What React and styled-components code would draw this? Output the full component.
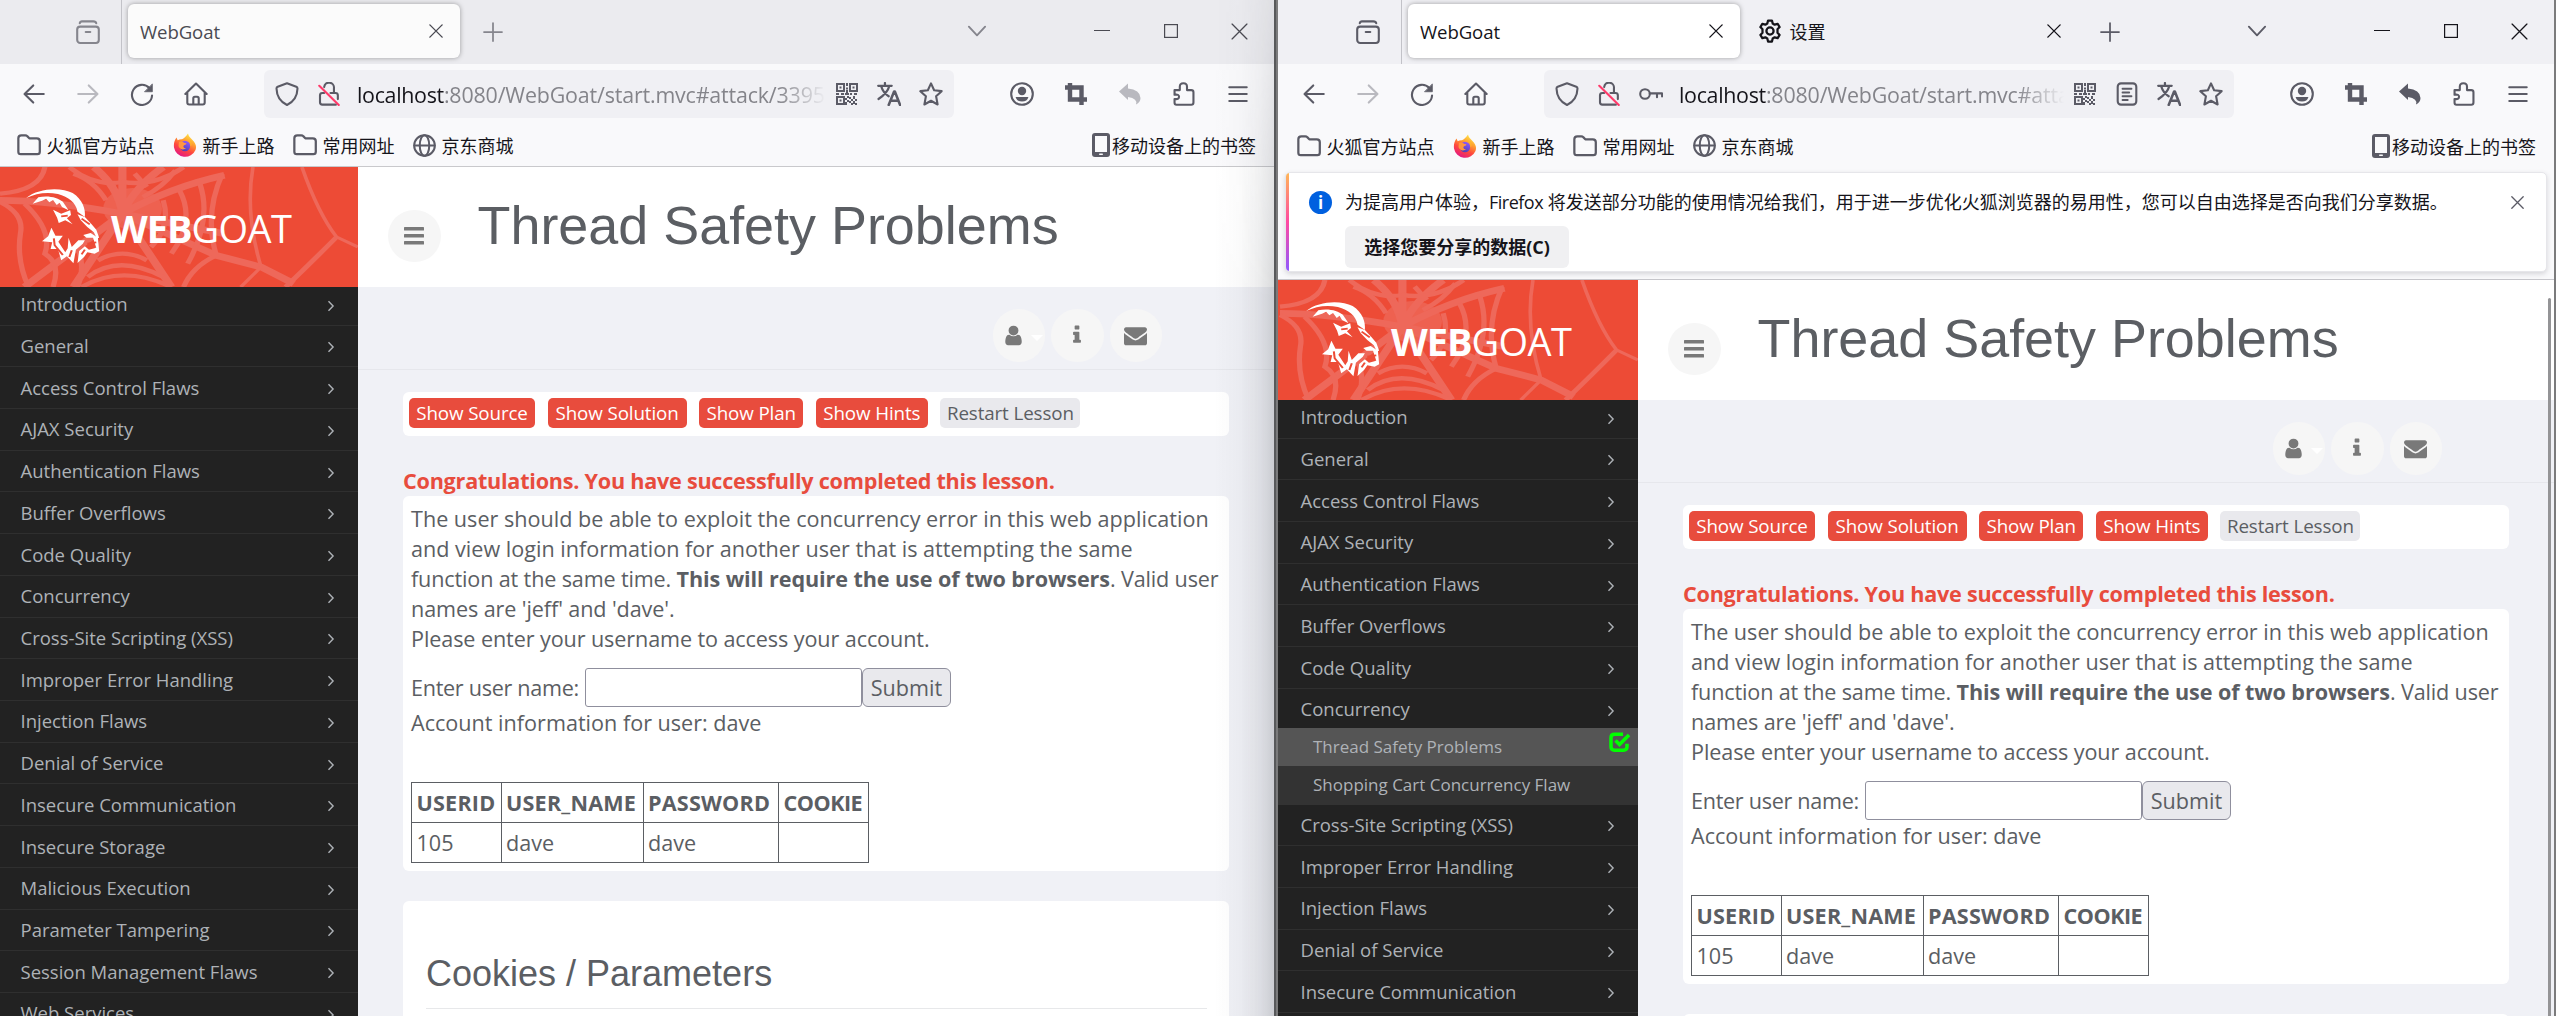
import React from "react";
import styled, { createGlobalStyle } from "styled-components";

const UI = `"Open Sans", "Noto Sans", "Noto Sans CJK SC", sans-serif`;

const Global = createGlobalStyle`
  *, *::before, *::after { box-sizing: border-box; }
  body { margin: 0; overflow: hidden; background: #6f7173; font-family: ${UI}; }
  button, input { font: inherit; color: inherit; }
`;

/* ---------- window frame ---------- */

const Desktop = styled.div`
  display: flex;
  width: 2556px;
  height: 1016px;
  overflow: hidden;
  background: linear-gradient(90deg, #58595b 0 1276px, #7b7b7c 1276px);
`;

const Pane = styled.div`
  position: relative;
  display: flex;
  justify-content: flex-end;
  width: ${(p) => p.$width}px;
  margin-right: ${(p) => p.$gap}px;
  height: 1016px;
  overflow: hidden;
`;

const Frame = styled.div`
  flex: none;
  display: flex;
  flex-direction: column;
  width: 1276px;
  height: 1016px;
  background: #f9f9fb;
`;

const EdgeShade = styled.div`
  position: absolute;
  inset: 0 0 0 auto;
  width: 60px;
  pointer-events: none;
  background: linear-gradient(90deg, rgba(60, 64, 72, 0) 0%, rgba(60, 64, 72, 0.03) 45%, rgba(60, 64, 72, 0.1) 75%, rgba(60, 64, 72, 0.2) 100%);
  mask-image: linear-gradient(180deg, rgba(0, 0, 0, 0.35), #000 300px);
`;

/* ---------- tab strip ---------- */

const TabStrip = styled.div`
  flex: none;
  display: flex;
  align-items: center;
  height: 64px;
  padding-left: 63px;
  background: ${(p) => (p.$active ? "#f0f0f4" : "#ebebef")};
  color: ${(p) => (p.$active ? "#15141a" : "#4a4a52")};
`;

const Slot = styled.span`
  flex: none;
  display: flex;
  align-items: center;
  justify-content: center;
  width: ${(p) => p.$w}px;
  height: ${(p) => p.$h || 48}px;
  color: ${(p) => p.$color || "#5b5b66"};
  opacity: ${(p) => (p.$dim ? 0.4 : 1)};
  svg { display: block; }
`;

const StripDivider = styled.span`
  width: 1px;
  height: 64px;
  margin: 0 6px;
  background: #c2c2c8;
`;

const Tab = styled.div`
  flex: none;
  display: flex;
  align-items: center;
  width: 332px;
  height: 54px;
  margin-right: 5.5px;
  margin-top: -2px;
  padding: 0 12px;
  gap: 8px;
  border-radius: 6px;
  font-size: 18px;
  background: ${(p) => (p.$current ? (p.$active ? "#fff" : "#fbfbfb") : "transparent")};
  box-shadow: ${(p) => (p.$current ? "0 0 5px rgba(0,0,0,.35)" : "none")};
`;

const TabTitle = styled.span`
  flex: 1;
  font-size: ${(p) => (p.$cjk ? 18 : 18.6)}px;
  letter-spacing: ${(p) => (p.$cjk ? 0 : -0.1)}px;
`;

const WindowButtons = styled.div`
  display: flex;
  margin-left: auto;
  align-items: center;
  margin-top: -2px;
`;

const ButtonGap = styled.span`
  width: 63px;
`;

/* ---------- navigation bar ---------- */

const NavBar = styled.div`
  flex: none;
  display: flex;
  align-items: center;
  height: 60px;
  padding: 0 9px;
`;

const UrlField = styled.div`
  display: flex;
  align-items: center;
  width: 690px;
  height: 48px;
  margin: 0 41px;
  padding: 0 2px;
  border-radius: 6px;
  background: #f0f0f4;
`;

const UrlText = styled.span`
  flex: 1;
  min-width: 0;
  overflow: hidden;
  white-space: nowrap;
  margin-left: 7px;
  font-size: 21.4px;
  letter-spacing: -0.16px;
  color: #84848a;
  mask-image: linear-gradient(90deg, #000 calc(100% - 48px), transparent);
  b { font-weight: 400; color: #15141a; letter-spacing: -0.3px; }
`;

/* ---------- bookmarks ---------- */

const Bookmarks = styled.div`
  flex: none;
  display: flex;
  align-items: center;
  height: ${(p) => (p.$tall ? 48 : 43)}px;
  padding: 0 18px ${(p) => (p.$tall ? 5 : 0)}px 18.5px;
  border-bottom: ${(p) => (p.$tall ? "0" : "1px solid #c9c9cc")};
`;

const Bookmark = styled.span`
  display: flex;
  align-items: center;
  gap: ${(p) => (p.$last ? 2 : 6)}px;
  margin-right: ${(p) => (p.$last ? 0 : 18)}px;
  margin-left: ${(p) => (p.$last ? "auto" : 0)};
  font: 18px/26px "Noto Sans CJK SC", sans-serif;
  color: #15141a;
  svg { display: block; flex: none; color: #5b5b66; }
`;

/* ---------- notification ---------- */

const NoticeArea = styled.div`
  flex: none;
  height: 108px;
  padding: 0 7px;
  border-bottom: 1px solid #c6c6cb;
`;

const Notice = styled.div`
  position: relative;
  display: grid;
  grid-template-columns: 24px 1fr 30px;
  column-gap: 12px;
  height: 100px;
  padding: 15px 14px 0 23px;
  border-radius: 5px;
  overflow: hidden;
  background: #fff;
  border: 1px solid #e6e6ea;
  box-shadow: 0 2px 5px rgba(58, 57, 68, 0.18);
  font: 18px/28px "Open Sans", "Noto Sans CJK SC", sans-serif;
  color: #15141a;
  &::before {
    content: "";
    position: absolute;
    inset: 0 auto 0 0;
    width: 3px;
    background: linear-gradient(#ffb657, #ff4aa2 50%, #9059ff);
  }
`;

const InfoDot = styled.span`
  width: 23px;
  height: 23px;
  margin-top: 3px;
  border-radius: 50%;
  background: #0060df;
  color: #fff;
  font: 700 17px/23px "Open Sans", sans-serif;
  text-align: center;
`;

const NoticeText = styled.div`
  white-space: nowrap;
`;

const Latin = styled.span`
  letter-spacing: -0.5px;
`;

const NoticeButton = styled.button`
  display: block;
  width: 224px;
  height: 42px;
  margin-top: 10px;
  border: 0;
  border-radius: 6px;
  background: #f0f0f2;
  color: #15141a;
  font: 700 18px/24px "Open Sans", "Noto Sans CJK SC", sans-serif;
  padding: 0;
`;

/* ---------- WebGoat page ---------- */

const Page = styled.div`
  position: relative;
  flex: 1;
  min-height: 0;
  display: grid;
  grid-template-columns: 360px 1fr;
  overflow: hidden;
  background: #f0f1f6;
`;

const Sidebar = styled.aside`
  min-height: 0;
  overflow: hidden;
  background: #222;
`;

const Brand = styled.div`
  position: relative;
  height: 120px;
  background: #ed4b36;
  overflow: hidden;
  svg { display: block; }
`;

const BrandName = styled.div`
  position: absolute;
  left: 113px;
  top: 35px;
  font: 400 38px/52px "Open Sans", sans-serif;
  letter-spacing: -0.6px;
  color: #fff;
  b { font-weight: 700; letter-spacing: -1px; }
`;

const MenuRow = styled.div`
  display: flex;
  justify-content: space-between;
  height: ${(p) => (p.$open ? 38.7 : 41.72)}px;
  margin-top: ${(p) => (p.$first ? -3.2 : 0)}px;
  padding: 7.4px 23px 0 22.5px;
  border-bottom: ${(p) => (p.$open ? 0 : 1)}px solid #2f2f2f;
  font-size: 18.5px;
  line-height: 26px;
  color: #aeb2b7;
  svg { margin-top: 8.5px; }
`;

const SubRow = styled.div`
  display: flex;
  justify-content: space-between;
  height: 38.5px;
  padding: 6px 7px 0 35px;
  font-size: 17px;
  line-height: 26px;
  background: ${(p) => (p.$current ? "#555" : "#333")};
  color: #aeb2b7;
  svg { margin-top: -2px; }
`;

const Main = styled.main`
  min-width: 0;
`;

const TitleBar = styled.header`
  display: flex;
  height: 120px;
  padding-left: 30px;
  background: #fff;
`;

const Round = styled.span`
  flex: none;
  display: flex;
  align-items: center;
  justify-content: center;
  width: 52.5px;
  height: 52.5px;
  border-radius: 50%;
  background: #f6f6f6;
  color: #797979;
  margin-top: ${(p) => p.$top || 0}px;
`;

const Title = styled.h1`
  margin: 28px 0 0 37px;
  font: 400 53.9px/60px "Liberation Sans", Arial, sans-serif;
  color: #5b5e63;
`;

const Tools = styled.div`
  display: flex;
  justify-content: flex-end;
  gap: 6px;
  height: 83px;
  padding: 22px 112px 0 0;
  border-bottom: 1px solid #e6e7ec;
`;

const Caret = styled.i`
  margin-left: 6px;
  margin-top: 6px;
  margin-right: -7px;
  border: 6px solid transparent;
  border-top-color: #fff;
  border-bottom: 0;
`;

const Body = styled.div`
  padding: 22px 45px 0;
  font-size: 21.6px;
  line-height: 30px;
  color: #5b5e63;
`;

const Card = styled.section`
  border-radius: 6px;
  background: #fff;
`;

const ButtonBar = styled(Card)`
  display: flex;
  gap: 12.6px;
  height: 44px;
  padding: 6px;
`;

const LessonButton = styled.button`
  width: ${(p) => p.$w}px;
  height: 30px;
  padding: 0;
  border: 0;
  border-radius: 5px;
  white-space: nowrap;
  font-size: 18.8px;
  line-height: 30px;
  letter-spacing: -0.12px;
  background: ${(p) => (p.$plain ? "#e9e9ed" : "#e84c3d")};
  color: ${(p) => (p.$plain ? "#5b5e63" : "#fff")};
`;

const Congrats = styled.div`
  margin-top: 30px;
  height: 30px;
  font-weight: 700;
  white-space: nowrap;
  letter-spacing: -0.24px;
  color: #e84c3d;
`;

const Lesson = styled(Card)`
  height: 375px;
  padding: 8px 8px 0;
`;

const Line = styled.div`
  white-space: nowrap;
  letter-spacing: ${(p) => p.$ls || 0}px;
  b { letter-spacing: -0.1px; }
`;

const FormRow = styled.div`
  display: flex;
  align-items: center;
  height: 39px;
  margin: 14px 0 1px;
  white-space: nowrap;
`;

const FormLabel = styled.label`
  flex: none;
  width: 174px;
  letter-spacing: -0.3px;
`;

const NameInput = styled.input`
  flex: none;
  width: 277px;
  height: 39px;
  border: 1.5px solid #8f8f9d;
  border-radius: 3px;
  background: #fff;
`;

const Submit = styled.button`
  width: 89px;
  height: 39px;
  padding: 0;
  border: 1.5px solid #8f8f9d;
  border-radius: 6px;
  background: #e9e9ed;
`;

const Table = styled.table`
  margin-top: 43.5px;
  border-collapse: collapse;
  table-layout: fixed;
  width: 458px;
  th, td {
    height: 40px;
    padding: 1px 0 0 4.5px;
    border: 1px solid #5b5e63;
    text-align: left;
    white-space: nowrap;
  }
  th { letter-spacing: 0.2px; }
  th:last-child { letter-spacing: -0.5px; }
`;

const Col = styled.col`
  width: ${(p) => p.$w}px;
`;

const Cookies = styled(Card)`
  height: 300px;
  margin-top: 30px;
  padding: 48px 22px 0 23px;
`;

const CookiesTitle = styled.h2`
  margin: 0;
  height: 60px;
  border-bottom: 1px solid #e7e8ea;
  font: 400 36px/50px "Liberation Sans", Arial, sans-serif;
`;

const ScrollThumb = styled.div`
  position: absolute;
  right: 3px;
  top: 18px;
  bottom: 0;
  width: 3px;
  border-radius: 2px 2px 0 0;
  background: #949496;
`;

/* ---------- icons ---------- */

function Ico({ s = 24, w = 1.4, children, fill = "none", box = 16 }) {
  return (
    <svg width={s} height={s} viewBox={`0 0 ${box} ${box}`} fill={fill} stroke={fill === "none" ? "currentColor" : "none"} strokeWidth={w} strokeLinecap="round" strokeLinejoin="round">
      {children}
    </svg>
  );
}

const ViewIcon = () => (
  <Ico><path d="M4 .9h7.6q1.6 0 1.9 1.3M2.5 2.2Q2.8.9 4 .9" /><rect x=".8" y="4.4" width="14.4" height="10.9" rx="2" /><path d="M6.5 8h3" /></Ico>
);
const CloseIcon = ({ s = 14, w = 1.6 }) => <Ico s={s} w={w}><path d="M1 1l14 14M15 1L1 15" /></Ico>;
const PlusIcon = () => <Ico s={20} w={1.4}><path d="M8 .8v14.4M.8 8h14.4" /></Ico>;
const ChevronDown = () => <Ico s={20} w={1.5}><path d="M1.5 4.500L8 11.500l6.500-7" /></Ico>;
const MinIcon = () => <Ico s={16} w={1.2}><path d="M.5 7.500h15" /></Ico>;
const MaxIcon = () => <svg width="14" height="14" fill="none" stroke="currentColor" strokeWidth="1.2"><rect x=".6" y=".6" width="12.8" height="12.8" /></svg>;
const BackIcon = () => <Ico><path d="M14.5 8H1.8M7.5 2.300L1.700 8l5.800 5.700" /></Ico>;
const ForwardIcon = () => <Ico><path d="M1.5 8h12.700M8.500 2.300L14.300 8l-5.800 5.700" /></Ico>;
const ReloadIcon = () => (
  <Ico><path d="M12.9 4A6.700 6.700 0 1 0 14.700 9" /><path d="M14.9 1.500v5H9.900z" fill="currentColor" strokeWidth=".5" /></Ico>
);
const HomeIcon = () => (
  <Ico><path d="M.9 8L8 1l7.100 7M2.200 7v6.700q0 1.300 1.300 1.300h9q1.300 0 1.300-1.300V7M6.200 14.800v-4q0-1 1-1h1.600q1 0 1 1v4" /></Ico>
);
const ShieldIcon = () => <Ico><path d="M8 .9l6.200 2.300q.8.300.8 1.100Q14.800 12 8 15.300 1.200 12 1 4.300 1 3.500 1.800 3.200z" /></Ico>;
const LockIcon = () => (
  <Ico><path d="M4.800 3.400V3.300a3.200 3.200 0 0 1 6.500.8v3M9 7.300h3.300q1.600 0 1.600 1.600v2.500M4.800 7.300H3.600Q2 7.300 2 8.900v4.600q0 1.600 1.600 1.600h9" /><path d="M1.500 2.500l13 12.800" stroke="#ff3b6b" /></Ico>
);
const KeyIcon = () => <Ico><circle cx="4" cy="8" r="3.2" /><path d="M7.200 7.600h8.200v2M12 7.600v2.600" /></Ico>;
const QrIcon = () => (
  <svg width="22" height="22" viewBox="0 0 22 22" fill="none" stroke="currentColor" strokeWidth="2">
    <rect x="1" y="1" width="7" height="7" /><rect x="14" y="1" width="7" height="7" /><rect x="1" y="14" width="7" height="7" />
    <path d="M3.500 4.500h2M16.500 4.500h2M3.500 17.500h2M11 0v3M10 5.500h2M11 7v3M0 11h3M5 11h3M9 11h4M14 11h2M18 11h3M12 13v2M10 15v2M12 17v2M10 19v3M14 14v2M16 16v2M18 13v3M20 16v2M14 18v2M18 18v3M16 20v2M20 20v2" />
  </svg>
);
const ReaderIcon = () => (
  <Ico><rect x="1.8" y=".9" width="12.4" height="14.2" rx="2.2" /><path d="M5 4.500h6M5 7h4.500M5 9.500h6M5 12h3.500" strokeWidth="1.2" /></Ico>
);
const TranslateIcon = () => (
  <Ico w={1.5}><path d="M.8 2.500h9M5.300.7v1.800M8.200 2.700Q7 7.500 1 11.300M2.800 2.800Q4 7 7.800 9.500" /><path d="M7.800 15.300l3.600-9h.5l3.500 9M9 12.500h5.200" strokeWidth="1.7" /></Ico>
);
const StarIcon = () => <Ico><path d="M8 .9l2.100 4.600 5 .6-3.700 3.400 1 5.500L8 12.500 3.600 15l1-5.500L.9 6.100l5-.6z" /></Ico>;
const AccountIcon = () => (
  <Ico><circle cx="8" cy="8" r="7.2" /><circle cx="8" cy="6" r="2.8" fill="currentColor" stroke="none" /><path d="M3.700 10h8.600q-.8 3-4.300 3t-4.300-3z" fill="currentColor" stroke="none" /></Ico>
);
const CropIcon = () => (
  <svg width="22" height="22" viewBox="0 0 22 22" fill="none" stroke="currentColor" strokeWidth="4.4">
    <path d="M5 0v16.500h17M0 4.500h16.500V22" />
  </svg>
);
const UndoIcon = () => (
  <svg width="22" height="22" viewBox="0 0 22 22" fill="currentColor"><path d="M0 8.500L9 .5v5q12 1 12.500 9.500 0 4-4.500 6.500 2-6-8-7.500v3z" /></svg>
);
const PuzzleIcon = () => (
  <Ico><path d="M3 15.200q-1.300 0-1.300-1.300v-2.600q3 .5 3-1.400t-3-1.400V5.400h3.500V3.100Q5.200.8 7.600.8T10 3.100v2.300h2.800q1.500 0 1.500 1.500v6.800q0 1.500-1.500 1.500z" /></Ico>
);
const MenuIcon = () => <Ico s={20} w={1.6}><path d="M1 2.500h14M1 8h14M1 13.500h14" /></Ico>;
const FolderIcon = () => <Ico w={1.5}><path d="M.9 12.500v-9q0-2 2-2h2.600q.8 0 1.300.6l1.400 1.400h5q2 0 2 2v7q0 1.600-1.600 1.600H2.500q-1.600 0-1.600-1.600z" /></Ico>;
const GlobeIcon = () => <Ico s={23} w={1.4}><circle cx="8" cy="8" r="7.2" /><ellipse cx="8" cy="8" rx="3.3" ry="7.2" /><path d="M1 8h14" /></Ico>;
const PhoneIcon = () => (
  <svg width="18" height="24" viewBox="0 0 18 24"><rect width="18" height="24" rx="3" fill="#5b5b66" /><rect x="3" y="3" width="12" height="16" fill="#f9f9fb" /><rect x="7" y="20.5" width="4" height="1.5" rx=".7" fill="#f9f9fb" /></svg>
);
const GearIcon = () => (
  <Ico w={1.5}>
    <circle cx="8" cy="8" r="2.4" />
    <path d="M6.700 1h2.600l.5 2 1.300.8 2-.6 1.300 2.200-1.400 1.500v2.200l1.400 1.500-1.300 2.200-2-.6-1.300.8-.5 2H6.700l-.5-2-1.300-.8-2 .6-1.300-2.200L3 9.100V6.900L1.600 5.400l1.300-2.200 2 .6L6.200 3z" />
  </Ico>
);
const FirefoxIcon = ({ id }) => (
  <svg width="24" height="24" viewBox="0 0 24 24">
    <defs>
      <linearGradient id={id + "a"} x1=".8" y1="0" x2=".3" y2="1">
        <stop offset="0" stopColor="#fff44f" /><stop offset=".35" stopColor="#ffa130" /><stop offset=".65" stopColor="#ff4a3c" /><stop offset="1" stopColor="#e31587" />
      </linearGradient>
      <linearGradient id={id + "b"} x1=".7" y1="0" x2=".3" y2="1">
        <stop offset="0" stopColor="#9059ff" /><stop offset="1" stopColor="#4b3fb0" />
      </linearGradient>
    </defs>
    <path d="M15 .5c.5 2.500 2 4 4 6 4 4 4.700 7 3.500 10.500A11.300 11.300 0 0 1 1 14.500C.5 10.500 1.500 7.500 3.500 4.500l1.200 2.700C6 6.500 7.500 6 9 6.200 11.500 5 13.500 3 15 .5z" fill={`url(#${id}a)`} />
    <circle cx="12" cy="13" r="5.2" fill={`url(#${id}b)`} />
    <path d="M6 9c1.500-1 4-.5 5 .8 1 .3 2 .3 2.500 1-.5 1.200-2.500 1-3 2.200-.5 1 .5 2.500 2.500 2-2 2.500-6.500 1.500-7.500-2z" fill="#ff9640" />
    <path d="M13 6c3 1 5 3.500 4.500 7.500 1.500-1 1.500-4-.5-6.500z" fill="#ffb52e" />
  </svg>
);

const FA_USER = "M1536 1399q0 109-62.5 187t-150.5 78h-854q-88 0-150.5-78t-62.5-187q0-85 8.500-160.500t31.500-152 58.500-131 94-89 134.500-34.500q131 128 313 128t313-128q76 0 134.500 34.500t94 89 58.500 131 31.500 152 8.500 160.500zm-256-887q0 159-112.500 271.500t-271.500 112.500-271.500-112.500-112.500-271.500 112.500-271.500 271.500-112.500 271.500 112.500 112.500 271.500z";
const FA_INFO = "M1216 1344v128q0 26-19 45t-45 19h-512q-26 0-45-19t-19-45v-128q0-26 19-45t45-19h64v-384h-64q-26 0-45-19t-19-45v-128q0-26 19-45t45-19h384q26 0 45 19t19 45v576h64q26 0 45 19t19 45zm-128-1152v192q0 26-19 45t-45 19h-256q-26 0-45-19t-19-45v-192q0-26 19-45t45-19h256q26 0 45 19t19 45z";
const FA_MAIL = "M1792 710v794q0 66-47 113t-113 47h-1472q-66 0-113-47t-47-113v-794q44 49 101 87 362 246 497 345 57 42 92.500 65.500t94.500 48 110 24.500h2q51 0 110-24.500t94.500-48 92.500-65.500q170-123 498-345 57-39 100-87zm0-294q0 79-49 151t-122 123q-376 261-468 325-10 7-42.500 31t-54 38.500-52 32.500-57.500 27-50 9h-2q-23 0-50-9t-57.500-27-52-32.500-54-38.500-42.500-31q-91-64-262-182.500t-205-142.500q-62-42-117-115.500t-55-136.500q0-78 41.500-130t118.500-52h1472q65 0 112.500 47t47.500 113z";
const FaIcon = ({ d, s = 23 }) => <svg width={s} height={s} viewBox="0 0 1792 1792" fill="currentColor"><path d={d} /></svg>;
const BarsIcon = () => <svg width="20" height="18" fill="currentColor"><rect width="20" height="3.5" rx=".6" /><rect y="7" width="20" height="3.5" rx=".6" /><rect y="14" width="20" height="3.5" rx=".6" /></svg>;
const AngleRight = () => <svg width="8" height="12" viewBox="0 0 8 12" fill="none" stroke="currentColor" strokeWidth="1.4"><path d="M1.500 1.300l4.600 4.700-4.600 4.700" /></svg>;
const CheckIcon = () => (
  <svg width="22" height="21" viewBox="0 0 22 21" fill="none" stroke="#00ff00" strokeWidth="3.5">
    <path d="M14 2.200H5.500Q2 2.200 2 5.500v9.300Q2 18.200 5.500 18.200h9Q18 18.200 18 14.800v-3" /><path d="M6.500 8.500l4 4 9.500-9.500" />
  </svg>
);

const BrandArt = () => (
  <svg width="360" height="120" viewBox="0 0 360 120">
    <g transform="translate(2 0) scale(.408 .3333) translate(0 -500)">
      <ellipse cx="325" cy="625" rx="72" ry="62" fill="#ee685a" opacity=".75" />
      <g fill="none" stroke="#ee685a" strokeWidth="13">
        <path d="M300 500L300 640M230 500Q290 560 300 640M400 500Q330 560 300 640M0 600Q120 600 300 640M550 525Q420 560 300 640M300 640L180 860M300 640L60 860M300 640L420 860M300 640L530 765L640 800L720 850M300 640L550 700" strokeWidth="20" />
        <path d="M170 500Q230 560 300 545Q380 560 450 500M110 500Q100 570 0 580M0 605Q60 640 50 700Q40 780 70 860M60 610Q130 690 110 760Q150 790 130 860M190 740Q210 800 190 860M215 830Q290 760 400 830M200 860Q300 790 420 860M240 780Q300 740 360 780M400 600Q420 680 370 740M440 570Q480 660 420 760M490 550Q520 660 460 790M545 520Q500 640 530 765Q470 800 450 860M825 710Q760 790 700 860" />
        <path d="M620 500Q600 640 640 800L590 860M740 500Q780 640 825 710L877 740" strokeWidth="9" />
        <path d="M180 520Q230 540 260 600M430 510Q400 560 350 590M330 520L360 560M250 520L280 560" />
      </g>
      <g fill="#fff">
        <path d="M64 593C95 562 150 560 178 578C203 598 210 626 208 650L190 634C186 606 168 590 142 581C112 574 88 580 64 593z" />
        <path d="M80 610L94 591C118 584 142 592 154 604L168 630L152 620L146 607L139 614L130 599L121 606L113 595L103 601z" />
        <path d="M130 628L150 640L172 630L174 644L164 654L178 672L160 660L144 668L140 652z" />
        <path d="M190 642L208 650L224 671L236 688L243 712L237 714L230 696L214 680L198 660z" />
        <path d="M126 682L136 706L154 706L143 724L160 756L166 744L168 712L176 740L192 720L208 720L203 730L186 748L180 789L164 768L150 780L142 746L124 746L128 726L103 723L118 708z" />
        <path d="M204 704L222 698L240 712L243 753L232 760L214 756L206 770L190 788L194 752L208 738L218 748L236 742L228 712L212 712z" />
      </g>
      <g stroke="#ed4b36" strokeWidth="5" fill="none">
        <path d="M200 655L220 672M132 714L134 735L154 764M176 750L170 770M214 730L236 726M200 762L208 748" />
        <path d="M150 648L166 646" />
      </g>
    </g>
  </svg>
);

/* ---------- composed pieces ---------- */

const MENU = [
  "Introduction", "General", "Access Control Flaws", "AJAX Security", "Authentication Flaws", "Buffer Overflows",
  "Code Quality", "Concurrency", "Cross-Site Scripting (XSS)", "Improper Error Handling", "Injection Flaws",
  "Denial of Service", "Insecure Communication", "Insecure Storage", "Malicious Execution", "Parameter Tampering",
  "Session Management Flaws", "Web Services",
];

function WebGoat({ expanded }) {
  const items = expanded ? MENU.slice(0, 13) : MENU;
  return (
    <Page>
      <Sidebar>
        <Brand>
          <BrandArt />
          <BrandName><b>WEB</b>GOAT</BrandName>
        </Brand>
        {items.map((name, i) => {
          const open = expanded && name === "Concurrency";
          return (
            <React.Fragment key={name}>
              <MenuRow $first={i === 0} $open={open}>{name}<AngleRight /></MenuRow>
              {open && (
                <>
                  <SubRow $current>Thread Safety Problems<CheckIcon /></SubRow>
                  <SubRow>Shopping Cart Concurrency Flaw</SubRow>
                </>
              )}
            </React.Fragment>
          );
        })}
      </Sidebar>
      <Main>
        <TitleBar>
          <Round $top={42.5}><BarsIcon /></Round>
          <Title>Thread Safety Problems</Title>
        </TitleBar>
        <Tools>
          <Round><FaIcon d={FA_USER} /><Caret /></Round>
          <Round><FaIcon d={FA_INFO} s={22} /></Round>
          <Round><FaIcon d={FA_MAIL} /></Round>
        </Tools>
        <Body>
          <ButtonBar>
            <LessonButton $w={126}>Show Source</LessonButton>
            <LessonButton $w={139}>Show Solution</LessonButton>
            <LessonButton $w={104}>Show Plan</LessonButton>
            <LessonButton $w={112}>Show Hints</LessonButton>
            <LessonButton $w={140} $plain>Restart Lesson</LessonButton>
          </ButtonBar>
          <Congrats>Congratulations. You have successfully completed this lesson.</Congrats>
          <Lesson>
            <Line>The user should be able to exploit the concurrency error in this web application</Line>
            <Line>and view login information for another user that is attempting the same</Line>
            <Line $ls={-0.15}>function at the same time. <b>This will require the use of two browsers</b>. Valid user</Line>
            <Line $ls={-0.1}>names are 'jeff' and 'dave'.</Line>
            <Line $ls={-0.1}>Please enter your username to access your account.</Line>
            <FormRow>
              <FormLabel>Enter user name:</FormLabel><NameInput /><Submit>Submit</Submit>
            </FormRow>
            <Line>Account information for user: dave</Line>
            <Table>
              <colgroup>
                <Col $w={89.5} /><Col $w={142} /><Col $w={135.5} /><col />
              </colgroup>
              <tbody>
                <tr><th>USERID</th><th>USER_NAME</th><th>PASSWORD</th><th>COOKIE</th></tr>
                <tr><td>105</td><td>dave</td><td>dave</td><td /></tr>
              </tbody>
            </Table>
          </Lesson>
          <Cookies>
            {!expanded && <CookiesTitle>Cookies / Parameters</CookiesTitle>}
          </Cookies>
        </Body>
      </Main>
      {expanded && <ScrollThumb />}
    </Page>
  );
}

function Browser({ active }) {
  const dim = active ? "#5b5b66" : "#85858d";
  return (
    <Frame>
      <TabStrip $active={active}>
        <Slot $w={54} $color={dim}><ViewIcon /></Slot>
        <StripDivider />
        <Tab $current $active={active}>
          <TabTitle>WebGoat</TabTitle>
          <Slot $w={24} $color="inherit"><CloseIcon /></Slot>
        </Tab>
        {active && (
          <Tab>
            <GearIcon />
            <TabTitle $cjk>设置</TabTitle>
            <Slot $w={24} $color="inherit"><CloseIcon /></Slot>
          </Tab>
        )}
        <Slot $w={54} $color={dim}><PlusIcon /></Slot>
        <WindowButtons>
          <Slot $w={54} $color={dim}><ChevronDown /></Slot>
          <ButtonGap />
          <Slot $w={69} $color="inherit"><MinIcon /></Slot>
          <Slot $w={69} $color="inherit"><MaxIcon /></Slot>
          <Slot $w={69} $color="inherit"><CloseIcon s={17} w={1.2} /></Slot>
        </WindowButtons>
      </TabStrip>
      <NavBar>
        <Slot $w={54}><BackIcon /></Slot>
        <Slot $w={54} $dim><ForwardIcon /></Slot>
        <Slot $w={54}><ReloadIcon /></Slot>
        <Slot $w={54}><HomeIcon /></Slot>
        <UrlField>
          <Slot $w={42}><ShieldIcon /></Slot>
          <Slot $w={42}><LockIcon /></Slot>
          {active && <Slot $w={42}><KeyIcon /></Slot>}
          <UrlText><b>localhost</b>:8080/WebGoat/start.mvc#attack/3395</UrlText>
          <Slot $w={42}><QrIcon /></Slot>
          {active && <Slot $w={42}><ReaderIcon /></Slot>}
          <Slot $w={42}><TranslateIcon /></Slot>
          <Slot $w={42}><StarIcon /></Slot>
        </UrlField>
        <Slot $w={54}><AccountIcon /></Slot>
        <Slot $w={54}><CropIcon /></Slot>
        <Slot $w={54} $dim={!active}><UndoIcon /></Slot>
        <Slot $w={54}><PuzzleIcon /></Slot>
        <Slot $w={54}><MenuIcon /></Slot>
      </NavBar>
      <Bookmarks $tall={active}>
        <Bookmark><FolderIcon />火狐官方站点</Bookmark>
        <Bookmark><FirefoxIcon id={active ? "fr" : "fl"} />新手上路</Bookmark>
        <Bookmark><FolderIcon />常用网址</Bookmark>
        <Bookmark><GlobeIcon />京东商城</Bookmark>
        <Bookmark $last><PhoneIcon />移动设备上的书签</Bookmark>
      </Bookmarks>
      {active && (
        <NoticeArea>
          <Notice>
            <InfoDot>i</InfoDot>
            <NoticeText>
              为提高用户体验，<Latin>Firefox</Latin> 将发送部分功能的使用情况给我们，用于进一步优化火狐浏览器的易用性，您可以自由选择是否向我们分享数据。
              <NoticeButton>选择您要分享的数据(C)</NoticeButton>
            </NoticeText>
            <Slot $w={30} $h={28}><CloseIcon s={13} /></Slot>
          </Notice>
        </NoticeArea>
      )}
      <WebGoat expanded={active} />
    </Frame>
  );
}

export default function App() {
  return (
    <>
      <Global />
      <Desktop>
        <Pane $width={1274} $gap={4}>
          <Browser active={false} />
          <EdgeShade />
        </Pane>
        <Pane $width={1276} $gap={2}>
          <Browser active />
        </Pane>
      </Desktop>
    </>
  );
}
